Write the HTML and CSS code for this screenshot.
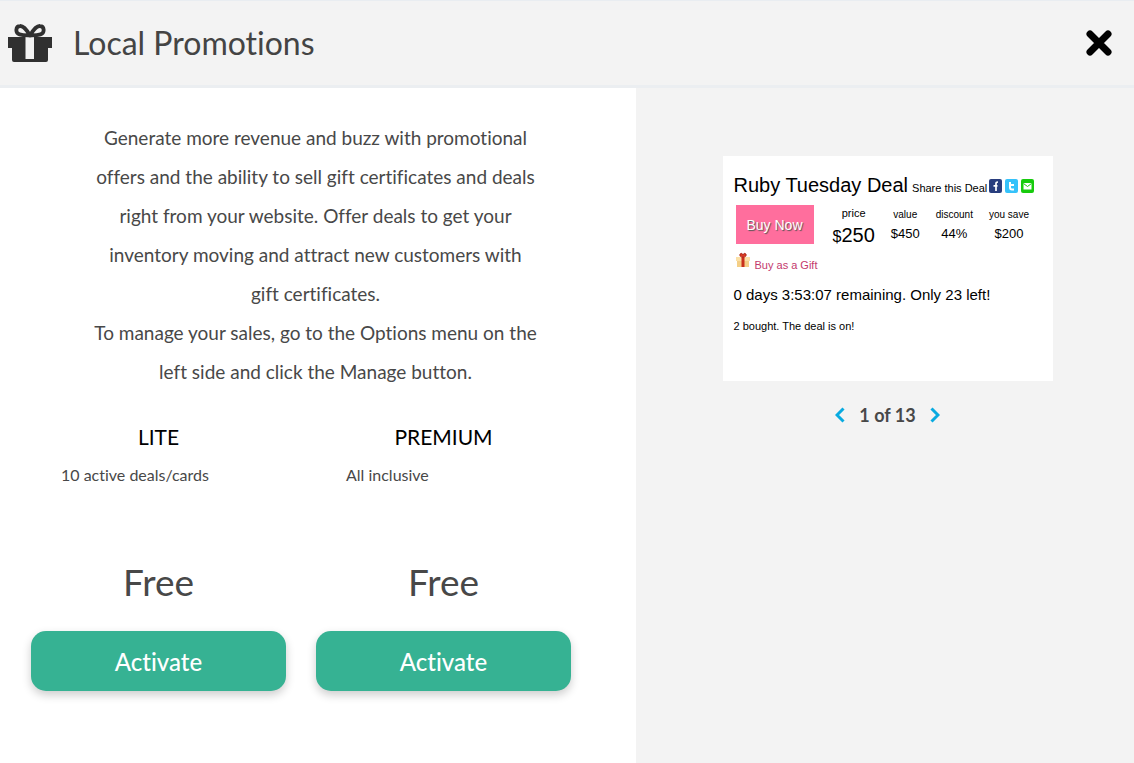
FILE: index.html
```html
<!DOCTYPE html>
<html lang="en">
<head>
<meta charset="utf-8">
<meta name="viewport" content="width=device-width, initial-scale=1">
<title>Local Promotions</title>
<link rel="stylesheet" href="styles.css">
</head>
<body>
<header class="header">
  <svg class="header-icon" viewBox="0 0 44 39" aria-hidden="true">
    <path d="M0 13h44v11h-4v12q0 2-2 2H6q-2 0-2-2V24H0z" fill="#303030"/>
    <path d="M17.500 13h8.500v22h-8.500z" fill="#f2f2f2"/>
    <path d="M22 11.500C18 4.500 15 1.800 12 2 7.500 2.200 7 9 11.500 10.300c3.500 1 7 1 10.500 1.200 3.500-.2 7-.2 10.500-1.200C37 9 36.500 2.200 32 2 29 1.800 26 4.500 22 11.500z" fill="none" stroke="#303030" stroke-width="3.800" stroke-linejoin="round"/>
  </svg>
  <h1 class="title">Local Promotions</h1>
  <button class="close" type="button" aria-label="Close">
    <svg viewBox="0 0 26 26" aria-hidden="true"><path d="M4 4l18 18M22 4L4 22" stroke="#000" stroke-width="7" stroke-linecap="round"/></svg>
  </button>
</header>
<main class="content">
  <section class="details">
    <p class="description">Generate more revenue and buzz with promotional offers and the ability to sell gift certificates and deals right from your website. Offer deals to get your inventory moving and attract new customers with gift certificates.<br>To manage your sales, go to the Options menu on the left side and click the Manage button.</p>
    <div class="plans">
      <article class="plan">
        <h2 class="plan-name">LITE</h2>
        <p class="plan-feature">10 active deals/cards</p>
        <p class="plan-price">Free</p>
        <button class="activate" type="button">Activate</button>
      </article>
      <article class="plan">
        <h2 class="plan-name">PREMIUM</h2>
        <p class="plan-feature">All inclusive</p>
        <p class="plan-price">Free</p>
        <button class="activate" type="button">Activate</button>
      </article>
    </div>
  </section>
  <aside class="preview">
    <article class="deal">
      <div class="deal-head">
        <h2 class="deal-title">Ruby Tuesday Deal</h2>
        <span class="share-label">Share this Deal</span>
        <div class="share">
          <a href="#" aria-label="Facebook"><svg viewBox="0 0 13 14"><rect width="13" height="14" rx="2" fill="#293e7e"/><path d="M7 12V4.500q0-1.500 2-1.500M4.500 6.800h4" stroke="#fff" stroke-width="1.700" fill="none"/></svg></a>
          <a href="#" aria-label="Twitter"><svg viewBox="0 0 13 14"><rect width="13" height="14" rx="2" fill="#35c2fa"/><path d="M5 3v5.500q0 2 2 2h2M5 6h4" stroke="#fff" stroke-width="2" fill="none"/></svg></a>
          <a href="#" aria-label="Email"><svg viewBox="0 0 13 14"><rect width="13" height="14" rx="2" fill="#17cb0d"/><path d="M2.500 4h8v6.500h-8z" fill="#fff"/><path d="M2.500 4.500l4 3 4-3" stroke="#17cb0d" fill="none"/></svg></a>
        </div>
      </div>
      <div class="deal-row">
        <button class="buy" type="button">Buy Now</button>
        <div class="stat stat-main"><span>price</span><strong><small>$</small>250</strong></div>
        <div class="stat"><span>value</span><strong>$450</strong></div>
        <div class="stat"><span>discount</span><strong>44%</strong></div>
        <div class="stat"><span>you save</span><strong>$200</strong></div>
      </div>
      <a class="gift" href="#">
        <svg viewBox="0 0 14 16" aria-hidden="true"><path d="M1 7h12v8H1z" fill="#f4cf87"/><path d="M0 5h14v4H0z" fill="#fbe0a6"/><path d="M5.500 5h3v10h-3z" fill="#c9301c"/><path d="M7 5Q3 5 4 2q2-2 3 1 1-3 3-1 1 3-3 3z" fill="#d93a20" stroke="#a72016" stroke-width=".8"/></svg>
        <span>Buy as a Gift</span>
      </a>
      <p class="remaining">0 days 3:53:07 remaining. Only 23 left!</p>
      <p class="bought">2 bought. The deal is on!</p>
    </article>
    <nav class="pager" aria-label="Preview pages">
      <button type="button" aria-label="Previous"><svg viewBox="0 0 10 16"><path d="M8.500 1.500L2 8l6.500 6.500" fill="none" stroke="#08aae0" stroke-width="3"/></svg></button>
      <span>1 of 13</span>
      <button type="button" aria-label="Next"><svg viewBox="0 0 10 16"><path d="M1.500 1.500L8 8l-6.500 6.500" fill="none" stroke="#08aae0" stroke-width="3"/></svg></button>
    </nav>
  </aside>
</main>
</body>
</html>
```

FILE: styles.css
```css
* { box-sizing: border-box; }
body {
  margin: 0;
  min-height: 100vh;
  display: flex;
  flex-direction: column;
  background: #fff;
  color: #484848;
  font-family: Lato, "Liberation Sans", sans-serif;
  font-variant-ligatures: none;
}
h1, h2, p { margin: 0; font-weight: 400; }
button { margin: 0; padding: 0; border: 0; background: none; font: inherit; cursor: pointer; }
svg { display: block; }

.header {
  display: flex;
  align-items: center;
  padding: 21px 22px 22px 8px;
  background: #f3f3f3;
  border-top: 1px solid #e9edf1;
  border-bottom: 3px solid #ebeef1;
}
.header-icon { width: 44px; height: 39px; margin-top: 2px; }
.title {
  margin-left: 21px;
  font-size: 32px;
  line-height: 41px;
  color: #444;
}
.close { margin-left: auto; }
.close svg { width: 26px; height: 26px; }

.content { flex: 1; display: grid; grid-template-columns: 636fr 498fr; }
.details { padding: 30px 36px 40px 31px; }
.description {
  max-width: 444px;
  margin: 0 auto;
  font-size: 19px;
  line-height: 39px;
  text-align: center;
}
.plans {
  display: grid;
  grid-template-columns: 1fr 1fr;
  gap: 30px;
  margin: 32px 29px 0 0;
}
.plan { display: flex; flex-direction: column; text-align: center; }
.plan-name { font-size: 21px; line-height: 28px; color: #000; }
.plan-feature {
  padding: 12px 30px 0;
  font-size: 16px;
  line-height: 24px;
  text-align: left;
}
.plan-price { margin-top: 71px; font-size: 37px; line-height: 48px; }
.activate {
  height: 60px;
  margin-top: 25px;
  border-radius: 15px;
  background: #36b293;
  box-shadow: 0 4px 10px rgba(0, 0, 0, .2);
  color: #fff;
  font-size: 24px;
  font-weight: 500;
}

.preview {
  display: flex;
  flex-direction: column;
  align-items: center;
  padding: 68px 0 40px 5px;
  background: #f3f3f3;
}
.deal {
  width: 330px;
  min-height: 225px;
  padding: 15px 11px;
  background: #fff;
  color: #000;
  font-family: "Liberation Sans", Arial, sans-serif;
}
.deal-head { display: flex; align-items: baseline; white-space: nowrap; }
.deal-title { font-size: 20px; line-height: 28px; }
.share-label { margin-left: 4px; font-size: 11px; }
.share { display: flex; align-self: center; gap: 3px; margin: 2px 0 0 2px; }
.share svg { width: 13px; height: 14px; }
.deal-row { display: flex; gap: 16px; margin: 6px 0 0 2px; }
.buy {
  width: 78px;
  height: 39px;
  margin-right: 3px;
  background: #ff6e9d;
  color: #fff;
  font-size: 14px;
  text-shadow: 1px 1px 1px #555;
}
.stat {
  display: flex;
  flex-direction: column;
  align-items: center;
  padding-top: 2px;
  font-size: 10px;
  line-height: 16px;
  white-space: nowrap;
}
.stat strong { font-size: 13px; font-weight: 400; line-height: 22px; }
.stat-main { padding: 0; font-size: 11px; }
.stat-main strong { font-size: 20px; line-height: 28px; }
.stat-main small { font-size: 16px; }
.gift {
  display: flex;
  align-items: flex-end;
  gap: 5px;
  margin: 1px 0 0 2px;
  color: #c4396d;
  font-size: 11px;
  line-height: 12px;
  text-decoration: none;
}
.gift svg { width: 14px; height: 16px; margin-bottom: 3px; }
.remaining { margin-top: 14px; font-size: 15px; line-height: 20px; white-space: nowrap; }
.bought { margin-top: 13px; font-size: 11px; line-height: 16px; }

.pager {
  display: flex;
  align-items: center;
  gap: 14px;
  margin-top: 22px;
  font-size: 18px;
  font-weight: 700;
  line-height: 24px;
}
.pager svg { width: 10px; height: 16px; }
```
